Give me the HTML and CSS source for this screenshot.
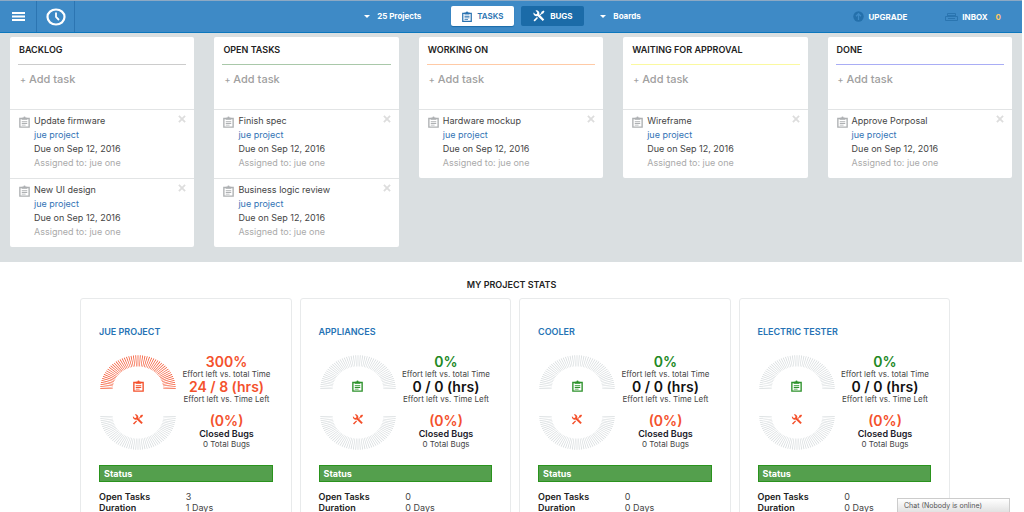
FILE: index.html
```html
<!DOCTYPE html>
<html lang="en">
<head>
<meta charset="utf-8">
<meta name="viewport" content="width=device-width, initial-scale=1">
<title>Task board</title>
<link rel="stylesheet" href="styles.css">
</head>
<body>
<svg class="sprite" aria-hidden="true">
  <symbol id="clip" viewBox="0 0 20 22">
    <path fill="none" stroke="currentColor" stroke-width="2.500" d="M1.500 4.500h17v16h-17z"/>
    <path fill="currentColor" d="M5 3h3a2 2 0 0 1 4 0h3v4H5zM5 9.500h10v2H5zM5 13h10v1.500H5zM5 16h7v1.500H5z"/>
  </symbol>
  <symbol id="tools" viewBox="0 0 24 24">
    <path fill="currentColor" d="M5 1a6 6 0 0 1 7.500 7.500l10 10.500-3 3L9 12A6 6 0 0 1 1 5l4 3.500 3-.5.500-3z"/>
    <path fill="currentColor" d="M23 3 21 1 16.500 4v2l-3 3 1.500 1.500 3-3h2zM8 14l2 2-6.500 7-2.500-2.500z"/>
  </symbol>
  <symbol id="close" viewBox="0 0 9 9">
    <path stroke="currentColor" stroke-width="2" d="m1 1 7 7M8 1 1 8"/>
  </symbol>
  <symbol id="arc-top" viewBox="0 0 76 38" preserveAspectRatio="none">
    <path fill="none" stroke="currentColor" stroke-width="12.500" pathLength="100.700" stroke-dasharray=".7 1.300" d="M6.500 38a31.500 31.500 0 0 1 63 0"/>
  </symbol>
  <symbol id="arc-bottom" viewBox="0 0 76 38" preserveAspectRatio="none">
    <path fill="none" stroke="currentColor" stroke-width="12.500" pathLength="100.700" stroke-dasharray=".7 1.300" d="M6.500 0a31.500 31.500 0 0 0 63 0"/>
  </symbol>
</svg>

<header class="topbar">
  <div class="brand">
    <button class="cell" aria-label="Menu"><svg class="menu-icon" viewBox="0 0 13 9"><path stroke="#fff" stroke-width="2" d="M0 1h13M0 4.500h13M0 8h13"/></svg></button>
    <a class="cell" href="#" aria-label="Home"><svg class="clock-icon" viewBox="0 0 20 20"><ellipse cx="10" cy="10" rx="8.500" ry="7.500" fill="none" stroke="#fff" stroke-width="2.200"/><path d="M10 5.500V10l3 3" fill="none" stroke="#fff" stroke-width="1.800"/></svg></a>
  </div>
  <nav class="nav">
    <button class="drop"><span class="caret"></span>25 Projects</button>
    <div class="tabs">
      <button class="tab active"><svg class="clip"><use href="#clip"/></svg>TASKS</button>
      <button class="tab"><svg class="tools"><use href="#tools"/></svg>BUGS</button>
    </div>
    <button class="drop"><span class="caret"></span>Boards</button>
  </nav>
  <div class="account">
    <a href="#"><svg class="up-icon" viewBox="0 0 11 11"><circle cx="5.500" cy="5.500" r="5.200" fill="#2470ab"/><path d="M5.500 9V3M3 5.200 5.500 2.700 8 5.200" fill="none" stroke="#3e8ac6" stroke-width="1.300"/></svg>UPGRADE</a>
    <a href="#"><svg class="inbox-icon" viewBox="0 0 13 10"><path d="M2.500 4V1.500h8V4M.5 4.500h12v4H.5z" fill="none" stroke="#2a75b0"/><path d="M3 3.500h7M3 6.500h7" stroke="#2a75b0"/></svg>INBOX <span class="count">0</span></a>
  </div>
</header>

<main>
  <section class="board" aria-label="Board">
    <article class="column gray">
      <h2>BACKLOG</h2>
      <button class="add"><span>+</span> Add task</button>
      <ul>
        <li><svg class="clip"><use href="#clip"/></svg><div><p>Update firmware</p><a href="#">jue project</a><p>Due on Sep 12, 2016</p><p class="who">Assigned to: jue one</p></div><button aria-label="Remove"><svg><use href="#close"/></svg></button></li>
        <li><svg class="clip"><use href="#clip"/></svg><div><p>New UI design</p><a href="#">jue project</a><p>Due on Sep 12, 2016</p><p class="who">Assigned to: jue one</p></div><button aria-label="Remove"><svg><use href="#close"/></svg></button></li>
      </ul>
    </article>
    <article class="column green">
      <h2>OPEN TASKS</h2>
      <button class="add"><span>+</span> Add task</button>
      <ul>
        <li><svg class="clip"><use href="#clip"/></svg><div><p>Finish spec</p><a href="#">jue project</a><p>Due on Sep 12, 2016</p><p class="who">Assigned to: jue one</p></div><button aria-label="Remove"><svg><use href="#close"/></svg></button></li>
        <li><svg class="clip"><use href="#clip"/></svg><div><p>Business logic review</p><a href="#">jue project</a><p>Due on Sep 12, 2016</p><p class="who">Assigned to: jue one</p></div><button aria-label="Remove"><svg><use href="#close"/></svg></button></li>
      </ul>
    </article>
    <article class="column orange">
      <h2>WORKING ON</h2>
      <button class="add"><span>+</span> Add task</button>
      <ul>
        <li><svg class="clip"><use href="#clip"/></svg><div><p>Hardware mockup</p><a href="#">jue project</a><p>Due on Sep 12, 2016</p><p class="who">Assigned to: jue one</p></div><button aria-label="Remove"><svg><use href="#close"/></svg></button></li>
      </ul>
    </article>
    <article class="column yellow">
      <h2>WAITING FOR APPROVAL</h2>
      <button class="add"><span>+</span> Add task</button>
      <ul>
        <li><svg class="clip"><use href="#clip"/></svg><div><p>Wireframe</p><a href="#">jue project</a><p>Due on Sep 12, 2016</p><p class="who">Assigned to: jue one</p></div><button aria-label="Remove"><svg><use href="#close"/></svg></button></li>
      </ul>
    </article>
    <article class="column blue">
      <h2>DONE</h2>
      <button class="add"><span>+</span> Add task</button>
      <ul>
        <li><svg class="clip"><use href="#clip"/></svg><div><p>Approve Porposal</p><a href="#">jue project</a><p>Due on Sep 12, 2016</p><p class="who">Assigned to: jue one</p></div><button aria-label="Remove"><svg><use href="#close"/></svg></button></li>
      </ul>
    </article>
  </section>

  <section class="stats">
    <h2>MY PROJECT STATS</h2>
    <div class="cards">
      <article class="card late">
        <h3><a href="#">JUE PROJECT</a></h3>
        <div class="summary">
          <div class="gauges">
            <svg class="arc effort"><use href="#arc-top"/></svg>
            <div class="marks"><svg class="clip"><use href="#clip"/></svg><svg class="tools"><use href="#tools"/></svg></div>
            <svg class="arc"><use href="#arc-bottom"/></svg>
          </div>
          <div class="figures">
            <strong class="percent">300%</strong><span>Effort left vs. total Time</span>
            <strong class="hours">24 / 8 (hrs)</strong><span>Effort left vs. Time Left</span>
            <strong class="closed">(0%)</strong><b>Closed Bugs</b><span>0 Total Bugs</span>
          </div>
        </div>
        <h4>Status</h4>
        <dl><dt>Open Tasks</dt><dd>3</dd><dt>Duration</dt><dd>1 Days</dd></dl>
      </article>
      <article class="card">
        <h3><a href="#">APPLIANCES</a></h3>
        <div class="summary">
          <div class="gauges">
            <svg class="arc effort"><use href="#arc-top"/></svg>
            <div class="marks"><svg class="clip"><use href="#clip"/></svg><svg class="tools"><use href="#tools"/></svg></div>
            <svg class="arc"><use href="#arc-bottom"/></svg>
          </div>
          <div class="figures">
            <strong class="percent">0%</strong><span>Effort left vs. total Time</span>
            <strong class="hours">0 / 0 (hrs)</strong><span>Effort left vs. Time Left</span>
            <strong class="closed">(0%)</strong><b>Closed Bugs</b><span>0 Total Bugs</span>
          </div>
        </div>
        <h4>Status</h4>
        <dl><dt>Open Tasks</dt><dd>0</dd><dt>Duration</dt><dd>0 Days</dd></dl>
      </article>
      <article class="card">
        <h3><a href="#">COOLER</a></h3>
        <div class="summary">
          <div class="gauges">
            <svg class="arc effort"><use href="#arc-top"/></svg>
            <div class="marks"><svg class="clip"><use href="#clip"/></svg><svg class="tools"><use href="#tools"/></svg></div>
            <svg class="arc"><use href="#arc-bottom"/></svg>
          </div>
          <div class="figures">
            <strong class="percent">0%</strong><span>Effort left vs. total Time</span>
            <strong class="hours">0 / 0 (hrs)</strong><span>Effort left vs. Time Left</span>
            <strong class="closed">(0%)</strong><b>Closed Bugs</b><span>0 Total Bugs</span>
          </div>
        </div>
        <h4>Status</h4>
        <dl><dt>Open Tasks</dt><dd>0</dd><dt>Duration</dt><dd>0 Days</dd></dl>
      </article>
      <article class="card">
        <h3><a href="#">ELECTRIC TESTER</a></h3>
        <div class="summary">
          <div class="gauges">
            <svg class="arc effort"><use href="#arc-top"/></svg>
            <div class="marks"><svg class="clip"><use href="#clip"/></svg><svg class="tools"><use href="#tools"/></svg></div>
            <svg class="arc"><use href="#arc-bottom"/></svg>
          </div>
          <div class="figures">
            <strong class="percent">0%</strong><span>Effort left vs. total Time</span>
            <strong class="hours">0 / 0 (hrs)</strong><span>Effort left vs. Time Left</span>
            <strong class="closed">(0%)</strong><b>Closed Bugs</b><span>0 Total Bugs</span>
          </div>
        </div>
        <h4>Status</h4>
        <dl><dt>Open Tasks</dt><dd>0</dd><dt>Duration</dt><dd>0 Days</dd></dl>
      </article>
    </div>
  </section>
</main>
<button class="chat">Chat (Nobody is online)</button>
</body>
</html>
```

FILE: styles.css
```css
* { box-sizing: border-box; margin: 0; padding: 0; }
html { scrollbar-width: none; }
body {
  font: 9px/14px Inter, sans-serif;
  color: #444;
  background: #fff;
  border-right: 1px solid #fff;
}
button { font: inherit; color: inherit; background: none; border: 0; cursor: pointer; }
a { color: inherit; text-decoration: none; }
ul { list-style: none; }
svg { display: block; flex: none; }
.sprite { position: absolute; width: 0; height: 0; }

.topbar {
  display: grid;
  grid-template-columns: 1fr auto 1fr;
  height: 33px;
  padding-right: 17px;
  margin-right: 1px;
  background: #3e8ac6;
  border-top: 1px solid #8da9c4;
  border-bottom: 1px solid #0c77bd;
  color: #fff;
  font-weight: 700;
  font-size: 8px;
}
.brand, .nav, .tabs, .account, .account a, .drop, .tab { display: flex; align-items: center; }
.brand { align-items: stretch; }
.cell { width: 37px; display: grid; place-items: center; border-right: 1px solid #2c75b2; }
.cell + .cell { width: 38px; }
.menu-icon { width: 13px; height: 9px; }
.clock-icon { width: 20px; height: 20px; }
.nav { gap: 16px; padding-bottom: 1px; }
.drop { gap: 7px; }
.drop:first-child { margin-right: 14px; }
.caret { border: 3px solid transparent; border-top-color: #fff; border-bottom: 0; }
.tabs { gap: 7px; }
.tab { width: 63px; height: 20px; justify-content: center; gap: 5px; border-radius: 2px; background: #1b6ba8; }
.tab.active { background: #fff; color: #2a72b0; font-weight: 600; box-shadow: 0 1px 1px #1b6ba8; }
.tab .clip { width: 10px; height: 11px; }
.tab .tools { width: 12px; height: 12px; }
.account { justify-content: flex-end; gap: 38px; padding-right: 4px; }
.account a { gap: 4px; }
.up-icon { width: 11px; height: 11px; }
.inbox-icon { width: 13px; height: 10px; }
.count { color: #ffc766; margin-left: 4px; }

.board {
  display: grid;
  grid-template-columns: repeat(5, minmax(0, 1fr));
  align-items: start;
  gap: 20px;
  padding: 4px 10px 15px;
  margin-right: 1px;
  background: #dadfe1;
}
.column { background: #fff; border-radius: 2px; }
.column h2 {
  margin: 0 8px;
  padding: 6px 1px 7px;
  font-size: 9px;
  font-weight: 600;
  color: #222;
  border-bottom: 1px solid #ccc;
}
.green h2 { border-color: #a9c8a9; }
.orange h2 { border-color: #ffcaa6; }
.yellow h2 { border-color: #fbf9a0; }
.blue h2 { border-color: #a9adf5; }
.add { display: block; padding: 7px 10px 22px; font-size: 11px; line-height: 14px; font-weight: 500; color: #a0a0a0; }
.add span { font-size: 9px; }
.column li {
  display: flex;
  gap: 4px;
  padding: 4px 8px 8px 9px;
  border-top: 1px solid #e2e4e5;
}
.column li div { flex: 1; }
.column li a { color: #3273b5; display: block; }
.column .who { color: #aaa; }
.column .clip { width: 11px; height: 12px; margin-top: 2px; color: #aeb1b3; }
.column li button { align-self: start; padding-top: 1px; color: #ddd; }
.column li button svg { width: 8px; height: 8px; }

.stats h2 { padding: 16px 0 6px; font-size: 9px; font-weight: 600; color: #222; text-align: center; }
.cards { display: grid; grid-template-columns: repeat(4, minmax(0, 1fr)); gap: 8px; padding: 0 73px 0 80px; }
.card { padding: 26px 18px; border: 1px solid #e8eaeb; border-radius: 3px; }
.card h3 { font-size: 9px; font-weight: 600; color: #2673b5; }
.summary { display: flex; justify-content: space-between; align-items: flex-start; margin-top: 15px; }
.gauges { width: 78px; display: flex; flex-direction: column; align-items: center; padding-top: 1px; color: #d6dbdd; }
.arc { width: 76px; height: 34px; }
.marks { display: flex; flex-direction: column; align-items: center; gap: 22px; margin: -9px 0; }
.marks .clip { width: 11px; height: 12px; color: #2e922c; }
.marks .tools { width: 12px; height: 11px; color: #f4512c; }
.figures { width: 92px; display: flex; flex-direction: column; align-items: center; font-size: 8px; line-height: 10px; white-space: nowrap; }
.figures strong { font-size: 14px; line-height: 15px; font-weight: 600; color: #111; }
.figures b { font-size: 9px; line-height: 11px; font-weight: 600; color: #1a1a2a; }
.figures .percent { color: #22891f; }
.figures .closed { margin-top: 9px; color: #f4512c; }
.late .effort, .late .marks .clip, .late .percent, .late .hours { color: #f4512c; }
.card h4 { margin-top: 15px; padding: 0 4px; font-size: 9px; line-height: 15px; font-weight: 700; color: #fff; background: #549f4d; border: 1px solid #2a931d; }
.card dl { display: grid; grid-template-columns: 1fr 1fr; margin-top: 9px; line-height: 11px; }
.card dt { font-weight: 600; color: #222; }

.chat {
  position: fixed;
  right: 14px;
  bottom: 0;
  width: 113px;
  padding: 1px 6px 0;
  font-size: 7px;
  line-height: 12px;
  text-align: left;
  color: #555;
  background: linear-gradient(#fff, #e2e2e2);
  border: 1px solid #ccc;
  border-bottom: 0;
}
```
